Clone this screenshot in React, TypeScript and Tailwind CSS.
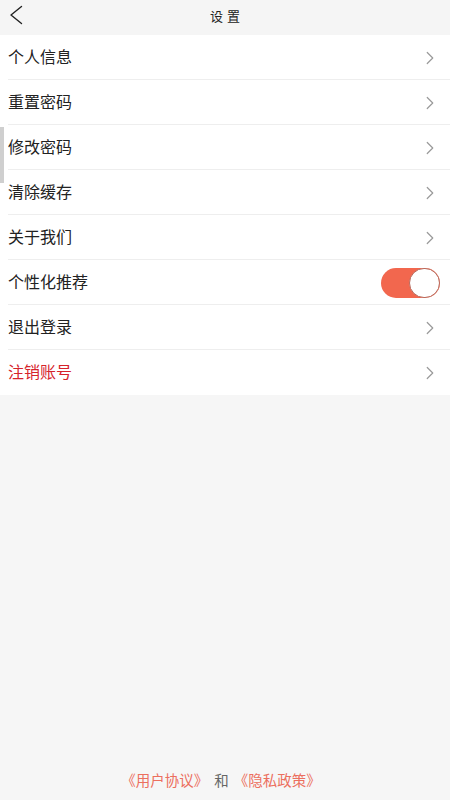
import { ChevronRight } from "lucide-react";

const rows = [
  { label: "个人信息" },
  { label: "重置密码" },
  { label: "修改密码" },
  { label: "清除缓存" },
  { label: "关于我们" },
  { label: "个性化推荐", toggle: true },
  { label: "退出登录" },
  { label: "注销账号", danger: true },
];

const font = { fontFamily: '"Noto Sans CJK SC", "Noto Sans", sans-serif' };

export default function App() {
  return (
    <div className="relative w-[450px] h-[800px] bg-[#f6f6f6] flex flex-col" style={font}>
      {/* header */}
      <div className="h-[35px] bg-[#f5f5f5] flex items-center relative">
        <svg className="absolute left-0 top-0 w-[30px] h-[30px]" viewBox="0 0 30 30" fill="none">
          <polyline points="21.5,6.5 11,15 21.5,23.5" stroke="#222" strokeWidth="1.4" strokeLinecap="round" strokeLinejoin="round" />
        </svg>
        <div className="flex-1 text-center text-[13px] tracking-[4px] pl-[4px] pb-[3px] text-[#222]">设置</div>
      </div>

      {/* list */}
      <div className="bg-white">
        {rows.map((r, i) => (
          <div key={r.label} className="h-[45px] flex items-center pl-[8px] relative">
            <div className={`flex-1 text-[16px] leading-[20px] pb-[3px] ${r.danger ? "text-[#d6232b]" : "text-[#222]"}`}>{r.label}</div>
            {r.toggle ? (
              <div className="mr-[10px] w-[59px] h-[30px] rounded-full bg-[#f2674e] flex items-center justify-end">
                <div className="w-[31px] h-[30px] rounded-full bg-white border border-[#b86a5c]" />
              </div>
            ) : (
              <ChevronRight className="mr-[9px] w-[22px] h-[22px] text-[#9a9a9a]" strokeWidth={1.3} />
            )}
            {i < rows.length - 1 && (
              <div className="absolute left-[8px] right-0 bottom-0 h-px bg-[#eeeeee]" />
            )}
          </div>
        ))}
      </div>

      <div className="flex-1" />

      {/* footer */}
      <div className="h-[50px] flex justify-center items-start pt-[19px] pr-[8px] text-[14.5px] leading-[22px]">
        <span className="text-[#ec6f5e]">《用户协议》</span>
        <span className="text-[#666] ml-[6px] mr-[5px]">和</span>
        <span className="text-[#ec6f5e]">《隐私政策》</span>
      </div>

      {/* scroll indicator on left edge */}
      <div className="absolute left-0 top-[127px] w-[4px] h-[56px] bg-[#cfcfcf]" />
    </div>
  );
}
